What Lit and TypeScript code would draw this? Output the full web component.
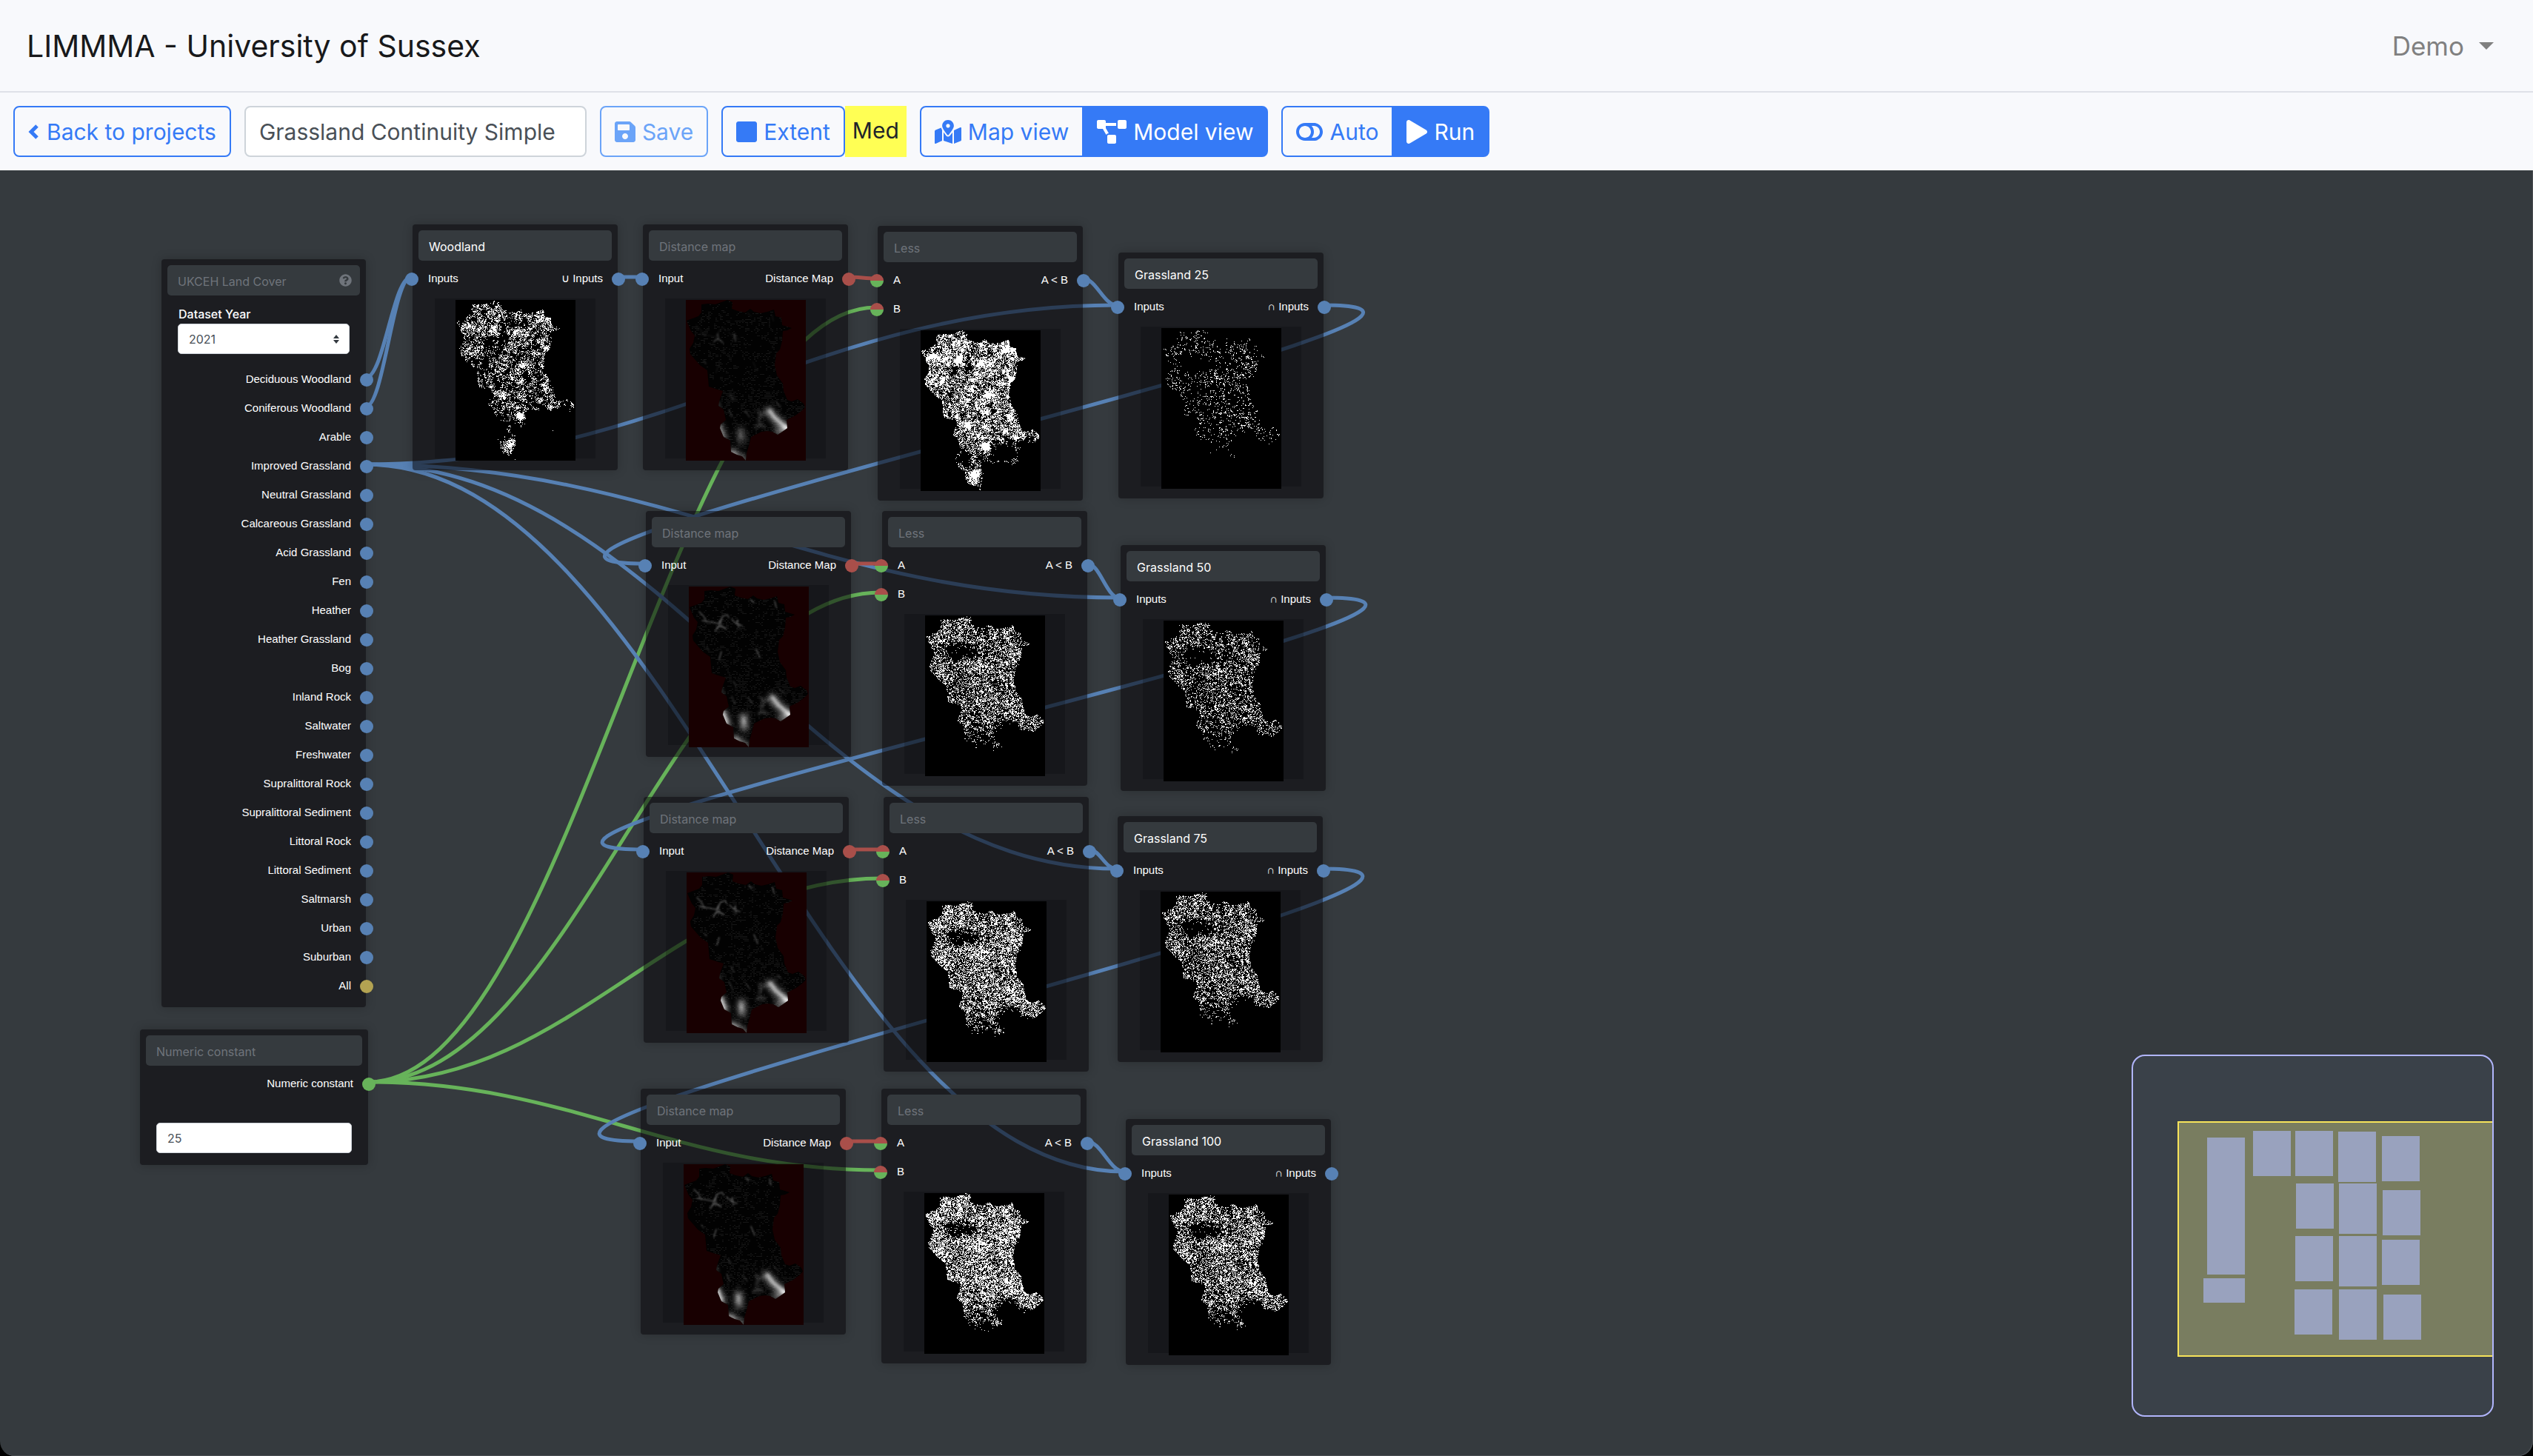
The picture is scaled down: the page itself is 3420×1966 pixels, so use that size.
import { LitElement, html, css, svg, nothing } from "lit";
import { customElement, property } from "lit/decorators.js";
import { classMap } from "lit/directives/class-map.js";
import { styleMap } from "lit/directives/style-map.js";

/* ---------- model ---------- */

type SocketKind = "set" | "distance" | "number" | "either" | "all";
type ThumbKind = "mask" | "distance";

interface Port {
  label: string;
  kind: SocketKind;
}

interface Thumb {
  kind: ThumbKind;
  seed: number;
  /** share of lit cells */
  density: number;
  /** true when the layer follows woodland clumps, false for open grassland */
  wooded: boolean;
}

interface FlowNode {
  id: string;
  x: number;
  y: number;
  w: number;
  h: number;
  placeholder: string;
  name: string;
  inputs: Port[];
  outputs: Port[];
  thumb?: Thumb;
  year?: string;
  value?: string;
}

interface Link {
  from: string;
  out: number;
  to: string;
  in: number;
  kind: "set" | "distance" | "number";
}

const HABITATS = [
  "Deciduous Woodland",
  "Coniferous Woodland",
  "Arable",
  "Improved Grassland",
  "Neutral Grassland",
  "Calcareous Grassland",
  "Acid Grassland",
  "Fen",
  "Heather",
  "Heather Grassland",
  "Bog",
  "Inland Rock",
  "Saltwater",
  "Freshwater",
  "Supralittoral Rock",
  "Supralittoral Sediment",
  "Littoral Rock",
  "Littoral Sediment",
  "Saltmarsh",
  "Urban",
  "Suburban",
];

const mask = (seed: number, density: number, wooded = false): Thumb => ({
  kind: "mask",
  seed,
  density,
  wooded,
});

const distanceNode = (id: string, x: number, y: number, wooded: boolean, seed: number): FlowNode => ({
  id, x, y, w: 277, h: 332,
  placeholder: "Distance map",
  name: "",
  inputs: [{ label: "Input", kind: "set" }],
  outputs: [{ label: "Distance Map", kind: "distance" }],
  thumb: { kind: "distance", seed, density: 0.2, wooded },
});

const lessNode = (id: string, x: number, y: number, thumb: Thumb): FlowNode => ({
  id, x, y, w: 277, h: 371,
  placeholder: "Less",
  name: "",
  inputs: [{ label: "A", kind: "either" }, { label: "B", kind: "either" }],
  outputs: [{ label: "A < B", kind: "set" }],
  thumb,
});

const setNode = (id: string, name: string, op: string, x: number, y: number, thumb: Thumb): FlowNode => ({
  id, x, y, w: 277, h: 332,
  placeholder: "",
  name,
  inputs: [{ label: "Inputs", kind: "set" }],
  outputs: [{ label: `${op} Inputs`, kind: "set" }],
  thumb,
});

const NODES: FlowNode[] = [
  {
    id: "cover", x: 218, y: 120, w: 276, h: 1010,
    placeholder: "UKCEH Land Cover",
    name: "",
    inputs: [],
    outputs: [
      ...HABITATS.map((label): Port => ({ label, kind: "set" })),
      { label: "All", kind: "all" },
    ],
    year: "2021",
  },
  {
    id: "number", x: 189, y: 1160, w: 308, h: 183,
    placeholder: "Numeric constant",
    name: "",
    inputs: [],
    outputs: [{ label: "Numeric constant", kind: "number" }],
    value: "25",
  },
  setNode("wood", "Woodland", "∪", 557, 73, mask(3, 0.31, true)),
  distanceNode("d1", 868, 73, true, 5),
  lessNode("l1", 1185, 75, mask(3, 0.5, true)),
  setNode("g1", "Grassland 25", "∩", 1510, 111, mask(11, 0.17)),
  distanceNode("d2", 872, 460, false, 6),
  lessNode("l2", 1191, 460, mask(11, 0.39)),
  setNode("g2", "Grassland 50", "∩", 1513, 506, mask(11, 0.29)),
  distanceNode("d3", 869, 846, false, 7),
  lessNode("l3", 1193, 846, mask(11, 0.47)),
  setNode("g3", "Grassland 75", "∩", 1509, 872, mask(11, 0.37)),
  distanceNode("d4", 865, 1240, false, 8),
  lessNode("l4", 1190, 1240, mask(11, 0.52)),
  setNode("g4", "Grassland 100", "∩", 1520, 1281, mask(11, 0.43)),
];

const LINKS: Link[] = [
  { from: "cover", out: 0, to: "wood", in: 0, kind: "set" },
  { from: "cover", out: 1, to: "wood", in: 0, kind: "set" },
  { from: "wood", out: 0, to: "d1", in: 0, kind: "set" },
  ...[1, 2, 3, 4].flatMap((n): Link[] => [
    { from: "cover", out: 3, to: `g${n}`, in: 0, kind: "set" },
    { from: `l${n}`, out: 0, to: `g${n}`, in: 0, kind: "set" },
    { from: "number", out: 0, to: `l${n}`, in: 1, kind: "number" },
  ]),
  ...[1, 2, 3].map((n): Link => ({ from: `g${n}`, out: 0, to: `d${n + 1}`, in: 0, kind: "set" })),
  ...[1, 2, 3, 4].map((n): Link => ({ from: `d${n}`, out: 0, to: `l${n}`, in: 0, kind: "distance" })),
];

const FIRST_ROW = 74;
const ROW_STEP = 39;

const socketY = (n: FlowNode, index: number) =>
  n.y + (n.year ? 163 : FIRST_ROW) + index * ROW_STEP - 3;

const linkPath = (link: Link): string => {
  const a = NODES.find((n) => n.id === link.from)!;
  const b = NODES.find((n) => n.id === link.to)!;
  const x1 = a.x + a.w;
  const y1 = socketY(a, link.out);
  const x2 = b.x - 2;
  const y2 = socketY(b, link.in);
  const bend = Math.round(Math.abs(x2 - x1) * 0.4);
  return `M${x1} ${y1}C${x1 + bend} ${y1} ${x2 - bend} ${y2} ${x2} ${y2}`;
};

/* ---------- raster previews ---------- */

const MAP_W = 162;
const MAP_H = 217;

const OUTLINE: [number, number][] = [
  [21, 6], [30, 5], [40, 6], [51, 2], [56, 0], [63, 3], [62, 12], [70, 15], [80, 17], [87, 12],
  [92, 16], [101, 18], [110, 16], [119, 13], [121, 22], [129, 24], [130, 34], [143, 38],
  [137, 41], [131, 42], [130, 55], [127, 67], [122, 72], [120, 88], [123, 102], [131, 113],
  [132, 123], [137, 135], [143, 137], [151, 134], [159, 140], [161, 145], [156, 150],
  [148, 156], [140, 160], [136, 162], [137, 173], [130, 178], [124, 182], [117, 178],
  [110, 177], [102, 178], [94, 182], [88, 185], [85, 197], [82, 207], [81, 217], [76, 211],
  [69, 209], [61, 205], [60, 190], [51, 185], [46, 173], [47, 168], [54, 162], [51, 148],
  [44, 143], [45, 137], [50, 123], [40, 120], [31, 117], [29, 95], [19, 88], [12, 80],
  [6, 73], [5, 66], [10, 58], [12, 48], [7, 42], [1, 28], [9, 25], [17, 22], [21, 17],
];

const inside = (x: number, y: number): boolean => {
  let hit = false;
  for (let i = 0, j = OUTLINE.length - 1; i < OUTLINE.length; j = i++) {
    const [xi, yi] = OUTLINE[i];
    const [xj, yj] = OUTLINE[j];
    if (yi > y !== yj > y && x < ((xj - xi) * (y - yi)) / (yj - yi) + xi) hit = !hit;
  }
  return hit;
};

const hash = (x: number, y: number, seed: number): number => {
  let h = Math.imul(x, 374761393) ^ Math.imul(y, 668265263) ^ Math.imul(seed, 2246822519);
  h = Math.imul(h ^ (h >>> 13), 1274126177);
  h = Math.imul(h ^ (h >>> 15), 2246822519);
  return ((h ^ (h >>> 16)) >>> 0) / 4294967296;
};

const smooth = (x: number, y: number, size: number, seed: number): number => {
  const gx = Math.floor(x / size);
  const gy = Math.floor(y / size);
  const fx = x / size - gx;
  const fy = y / size - gy;
  const top = hash(gx, gy, seed) * (1 - fx) + hash(gx + 1, gy, seed) * fx;
  const low = hash(gx, gy + 1, seed) * (1 - fx) + hash(gx + 1, gy + 1, seed) * fx;
  return top * (1 - fy) + low * fy;
};

/** x, y, radius x, radius y, weight */
type Patch = [number, number, number, number, number];

const WOOD_PATCHES: Patch[] = [
  [18, 38, 11, 6, 0.4], [52, 40, 6, 9, 0.55], [82, 44, 9, 5, 0.45], [86, 18, 7, 6, 0.4],
  [117, 22, 8, 9, 0.4], [20, 68, 9, 11, 0.2], [93, 88, 8, 7, 0.3], [122, 66, 6, 6, 0.3],
  [62, 129, 6, 6, 0.55], [88, 159, 6, 7, 0.65], [73, 194, 8, 8, 0.75], [32, 9, 10, 6, 0.25],
  [128, 146, 4, 4, 0.35], [66, 52, 7, 7, -0.35], [45, 55, 6, 6, -0.25], [112, 165, 16, 14, -0.8],
  [150, 147, 6, 6, -0.25], [55, 175, 12, 12, -0.4], [140, 165, 10, 14, -0.8],
  [60, 210, 8, 8, -0.3], [86, 190, 6, 16, -0.4], [66, 165, 14, 14, -0.2],
];

const GRASS_PATCHES: Patch[] = [
  [38, 44, 16, 7, -0.35], [60, 49, 15, 6, -0.35], [40, 56, 12, 5, -0.3], [112, 158, 13, 12, -0.9],
  [126, 172, 14, 12, -0.9], [68, 202, 26, 17, -1], [70, 214, 22, 14, -1], [48, 178, 10, 16, -0.6],
  [95, 91, 6, 6, -0.25], [42, 92, 6, 6, -0.2], [80, 68, 24, 10, 0.14], [112, 48, 12, 14, 0.14],
  [118, 124, 14, 10, 0.14], [16, 72, 8, 8, 0.1], [46, 10, 14, 8, 0.06], [140, 165, 8, 12, -0.3],
  [74, 172, 34, 24, -0.22], [100, 182, 20, 6, -0.2],
];

const maskPath = (t: Thumb): string => {
  const patches = t.wooded ? WOOD_PATCHES : GRASS_PATCHES;
  const scale = t.wooded ? 1 : 0.5 + t.density;
  let d = "";
  for (let y = 0; y < MAP_H; y++) {
    let run = 0;
    for (let x = 0; x <= MAP_W; x++) {
      let lit = false;
      if (x < MAP_W && inside(x + 0.5, y + 0.5)) {
        const ripple = 0.4 + 1.2 * smooth(x, y, 5, t.seed + 4);
        let p = t.density;
        for (const [cx, cy, rx, ry, w] of patches) {
          const q = ((x - cx) / rx) ** 2 + ((y - cy) / ry) ** 2;
          if (q < 4) p += w * scale * (w > 0 ? ripple : 1) * Math.exp(-q);
        }
        p += (smooth(x, y, 8, t.seed) - 0.5) * (t.wooded ? 0.4 : 0.3 * t.density);
        if (p > 0.02) {
          const v =
            0.55 * hash(x, y, t.seed + 1) +
            0.45 * smooth(x, y, t.wooded ? 3 : 2, t.seed + 2);
          lit = v < 0.16 + p * 0.68;
          if (p < 0.3 && lit) lit = hash(x, y, t.seed + 9) < 0.3 + p * 2.3;
        }
      }
      if (lit) run++;
      else if (run) {
        d += `M${x - run} ${y}h${run}v1h-${run}z`;
        run = 0;
      }
    }
  }
  return d;
};

const speckPath = (seed: number): string => {
  let d = "";
  for (let y = 0; y < MAP_H; y += 2) {
    for (let x = 0; x < MAP_W; x += 2) {
      const low = y > 120 ? 0.1 : 0;
      if (inside(x, y) && 0.5 * hash(x, y, seed) + 0.5 * smooth(x, y, 5, seed) < 0.36 + low) {
        d += `M${x} ${y}h2v1h-2z`;
      }
    }
  }
  return d;
};

const cache = new Map<string, string>();
const cached = (key: string, make: () => string): string => {
  if (!cache.has(key)) cache.set(key, make());
  return cache.get(key)!;
};

const OUTLINE_PATH = "M" + OUTLINE.map((p) => p.join(" ")).join("L") + "Z";

@customElement("map-thumb")
export class MapThumb extends LitElement {
  static styles = css`
    :host { display: block; }
    svg { display: block; width: 162px; height: 217px; }
    .pixels { shape-rendering: crispEdges; }
  `;

  @property({ attribute: false }) thumb!: Thumb;

  render() {
    const t = this.thumb;
    if (t.kind === "mask") {
      const d = cached(`m${t.seed}-${t.density}`, () => maskPath(t));
      return html`<svg viewBox="0 0 162 217" aria-hidden="true">
        <rect width="162" height="217" fill="#000" />
        <path class="pixels" d=${d} fill="#fff" />
      </svg>`;
    }
    const west = t.wooded ? 0.5 : 1;
    return html`<svg viewBox="0 0 162 217" aria-hidden="true">
      <defs>
        <clipPath id="land"><path d=${OUTLINE_PATH} /></clipPath>
        <filter id="wide" x="-20" y="100" width="200" height="140" filterUnits="userSpaceOnUse">
          <feGaussianBlur stdDeviation="4" />
        </filter>
        <filter id="soft" x="-20" y="100" width="200" height="140" filterUnits="userSpaceOnUse">
          <feGaussianBlur stdDeviation="2" />
        </filter>
        <filter id="fine" x="-10" y="-10" width="180" height="240" filterUnits="userSpaceOnUse">
          <feGaussianBlur stdDeviation="1" />
        </filter>
      </defs>
      <rect width="162" height="217" fill="#180001" />
      <path d=${OUTLINE_PATH} fill="#020202" />
      <g clip-path="url(#land)" fill="none" stroke-linecap="round" stroke-linejoin="round">
        <path d=${cached(`s${t.seed}`, () => speckPath(t.seed))} fill="#161616" />
        <g filter="url(#wide)" stroke="#fff">
          <path d="M112 150L120 160L136 174" stroke-width="9" stroke-opacity=".55" />
          <path d="M124 179L137 173" stroke-width="8" stroke-opacity=".5" />
          <path d="M45 171L51 186" stroke-width="9" stroke-opacity=${0.7 * west} />
          <path d="M74 176L75 190" stroke-width="8" stroke-opacity=${0.65 * west} />
          <path d="M61 204L80 217" stroke-width="6" stroke-opacity=".6" />
        </g>
        <g filter="url(#soft)" stroke="#fff">
          <path d="M113 149L119 158L128 166L138 174" stroke-width="3" stroke-opacity=".85" />
          <path d="M134 172L138 174" stroke-width="5" />
          <path d="M46 169L48 178L51 184" stroke-width="3" stroke-opacity=${0.9 * west} />
          <path d="M74 177L74 186" stroke-width="2" stroke-opacity=${0.6 * west} />
          <path d="M61 205L68 209" stroke-width="3" stroke-opacity=".6" />
          <path d="M98 150L101 156L98 164M104 154L113 150M94 172L100 168L106 172M44 138L46 145" stroke-width="2" stroke-opacity=".35" />
        </g>
        <g filter="url(#fine)" stroke="#888" stroke-width="1.6">
          <path d="M66 46L67 56M38 56L44 52L50 58M44 52L43 46" stroke-opacity=".4" />
          <path
            stroke-opacity=${t.wooded ? 0.1 : 0.55}
            d="M14 34L20 40L24 48M18 46L30 48L40 50L46 40L52 38L54 42M46 40L40 54L36 60M42 54L50 56M58 44L64 50L72 53M64 50L66 45M84 18L88 22M116 20L118 28M91 84L96 96M44 88L41 98"
          />
          <path d="M24 82L27 86M60 128L64 134M58 148L62 158M80 150L86 158M122 138L128 144" stroke-opacity=".3" />
        </g>
      </g>
    </svg>`;
  }
}

/* ---------- node ---------- */

@customElement("flow-node")
export class FlowNodeElement extends LitElement {
  static styles = css`
    :host {
      display: block;
      box-sizing: border-box;
      padding: 8px 8px 0;
      border-radius: 4px;
      background: rgba(8, 5, 9, 0.55);
      box-shadow: 0 0 14px rgba(0, 0, 0, 0.22);
      color: #fff;
      font: 15px/18px "Liberation Sans", Arial, sans-serif;
    }
    .header { display: grid; align-items: center; }
    .header > * { grid-area: 1 / 1; }
    .name, .value, .year {
      box-sizing: border-box;
      width: 100%;
      height: 41px;
      margin: 0;
      border: 0;
      border-radius: 5px;
      padding: 2px 14px 0;
      outline: 0;
      font: 16px/24px Inter, Roboto, sans-serif;
    }
    .name { background: #353a3e; color: #fff; }
    .name::placeholder { color: #6f747b; opacity: 1; }
    .help {
      justify-self: end;
      width: 17px;
      height: 17px;
      margin-right: 11px;
      fill: #6f747b;
    }
    .field { display: grid; gap: 2px; padding: 14px 14px 10px; }
    .caption { font: 500 16px/22px Inter, Roboto, sans-serif; padding-left: 1px; }
    .picker { display: grid; align-items: center; }
    .picker > * { grid-area: 1 / 1; }
    .year, .value {
      appearance: none;
      background: #fff;
      color: #495057;
      border: 1px solid #ced4da;
      padding-top: 0;
    }
    .arrows {
      justify-self: end;
      width: 10px;
      height: 12px;
      margin-right: 13px;
      fill: #343a40;
      pointer-events: none;
    }
    .ports { display: grid; gap: 1px; margin: 0 -8px; padding-top: 6px; }
    .row {
      position: relative;
      display: flex;
      align-items: center;
      justify-content: space-between;
      box-sizing: border-box;
      height: 38px;
      padding: 0 20px 2px 21px;
    }
    .out { margin-left: auto; }
    .socket {
      position: absolute;
      top: 10px;
      width: 18px;
      height: 18px;
      border-radius: 50%;
      background: #5781b4;
    }
    .left { left: -10px; }
    .right { right: -10px; }
    .distance { background: #a94f4a; }
    .number { background: #67b35a; }
    .all { background: #b3a352; }
    .either { background: linear-gradient(#a94f4a 50%, #67b35a 50%); }
    .preview {
      display: flex;
      justify-content: center;
      box-sizing: border-box;
      height: 216px;
      margin: 7px 22px 0;
      padding-top: 2px;
      background: rgba(0, 0, 0, 0.18);
    }
    .constant { padding: 33px 14px 0; }
  `;

  @property({ attribute: false }) node!: FlowNode;

  private row(index: number) {
    const input = this.node.inputs[index];
    const output = this.node.outputs[index];
    return html`<div class="row">
      ${input
        ? html`<span class=${classMap({ socket: true, left: true, [input.kind]: true })}></span>
            <span>${input.label}</span>`
        : nothing}
      ${output
        ? html`<span class="out">${output.label}</span>
            <span class=${classMap({ socket: true, right: true, [output.kind]: true })}></span>`
        : nothing}
    </div>`;
  }

  render() {
    const n = this.node;
    const rows = Math.max(n.inputs.length, n.outputs.length);
    return html`
      <div class="header">
        <input
          class="name"
          type="text"
          aria-label="Node name"
          placeholder=${n.placeholder}
          .value=${n.name}
        />
        ${n.year
          ? html`<svg class="help" viewBox="0 0 512 512" aria-hidden="true">
              <path d="M504 256c0 136.997-111.043 248-248 248S8 392.997 8 256C8 119.083 119.043 8 256 8s248 111.083 248 248zM262.655 90c-54.497 0-89.255 22.957-116.549 63.758-3.536 5.286-2.353 12.415 2.715 16.258l34.699 26.31c5.205 3.947 12.621 3.008 16.665-2.122 17.864-22.658 30.113-35.797 57.303-35.797 20.429 0 45.698 13.148 45.698 32.958 0 14.976-12.363 22.667-32.534 33.976C247.128 238.528 216 254.941 216 296v4c0 6.627 5.373 12 12 12h56c6.627 0 12-5.373 12-12v-1.333c0-28.462 83.186-29.647 83.186-106.667 0-58.002-60.165-102-116.531-102zM256 338c-25.365 0-46 20.635-46 46 0 25.364 20.635 46 46 46s46-20.636 46-46c0-25.365-20.635-46-46-46z" />
            </svg>`
          : nothing}
      </div>
      ${n.year
        ? html`<div class="field">
            <label class="caption" for="year">Dataset Year</label>
            <div class="picker">
              <select class="year" id="year"><option>${n.year}</option></select>
              <svg class="arrows" viewBox="0 0 10 12" aria-hidden="true">
                <path d="M5 0L9 5H1zM5 12L1 7H9z" />
              </svg>
            </div>
          </div>`
        : nothing}
      <div class="ports">${Array.from({ length: rows }, (_, i) => this.row(i))}</div>
      ${n.thumb ? html`<div class="preview"><map-thumb .thumb=${n.thumb}></map-thumb></div>` : nothing}
      ${n.value
        ? html`<div class="constant">
            <input class="value" type="text" inputmode="numeric" aria-label="Numeric constant" .value=${n.value} />
          </div>`
        : nothing}
    `;
  }
}

/* ---------- page ---------- */

const ICONS = {
  save: [448, "M433.941 129.941l-83.882-83.882A48 48 0 0 0 316.118 32H48C21.49 32 0 53.49 0 80v352c0 26.51 21.49 48 48 48h352c26.51 0 48-21.49 48-48V163.882a48 48 0 0 0-14.059-33.941zM224 416c-35.346 0-64-28.654-64-64 0-35.346 28.654-64 64-64s64 28.654 64 64c0 35.346-28.654 64-64 64zm96-304.52V212c0 6.627-5.373 12-12 12H76c-6.627 0-12-5.373-12-12V108c0-6.627 5.373-12 12-12h228.52c3.183 0 6.235 1.264 8.485 3.515l3.48 3.48A11.996 11.996 0 0 1 320 111.48z"],
  square: [448, "M400 32H48C21.5 32 0 53.5 0 80v352c0 26.5 21.5 48 48 48h352c26.5 0 48-21.5 48-48V80c0-26.500-21.5-48-48-48z"],
  map: [576, "M288 0c-69.59 0-126 56.41-126 126 0 56.26 82.35 158.8 113.9 196.02 6.39 7.54 17.82 7.54 24.2 0C331.65 284.8 414 182.26 414 126 414 56.41 357.59 0 288 0zm0 168c-23.2 0-42-18.8-42-42s18.8-42 42-42 42 18.8 42 42-18.8 42-42 42zM20.12 215.95A32.006 32.006 0 0 0 0 245.66v250.32c0 11.32 11.43 19.06 21.94 14.86L160 448V214.92c-8.84-15.98-16.07-31.54-21.25-46.42L20.12 215.95zM288 359.67c-14.07 0-27.38-6.18-36.51-16.96-19.66-23.2-40.57-49.62-59.49-76.72v182l192 64V266c-18.92 27.09-39.82 53.52-59.49 76.72-9.13 10.77-22.44 16.95-36.51 16.95zm266.06-198.51L416 224v288l139.88-55.95A31.996 31.996 0 0 0 576 426.34V176.02c0-11.32-11.43-19.06-21.94-14.86z"],
  model: [640, "M384 320H256c-17.67 0-32 14.33-32 32v128c0 17.67 14.33 32 32 32h128c17.67 0 32-14.33 32-32V352c0-17.67-14.33-32-32-32zM192 32c0-17.67-14.33-32-32-32H32C14.33 0 0 14.33 0 32v128c0 17.67 14.33 32 32 32h95.72l73.16 128.04C211.98 300.98 232.4 288 256 288h.28L192 175.51V128h224V64H192V32zM608 0H480c-17.67 0-32 14.33-32 32v128c0 17.67 14.33 32 32 32h128c17.67 0 32-14.33 32-32V32c0-17.67-14.33-32-32-32z"],
  toggle: [576, "M384 64H192C85.961 64 0 149.961 0 256s85.961 192 192 192h192c106.039 0 192-85.961 192-192S490.039 64 384 64zM64 256c0-70.741 57.249-128 128-128 70.741 0 128 57.249 128 128 0 70.741-57.249 128-128 128-70.741 0-128-57.249-128-128zm320 128h-48.905c65.217-72.858 65.236-183.12 0-256H384c70.741 0 128 57.249 128 128 0 70.74-57.249 128-128 128z"],
  play: [448, "M424.4 214.7L72.4 6.6C43.8-10.3 0 6.1 0 47.9V464c0 37.5 40.7 60.1 72.4 41.3l352-208c31.4-18.5 31.5-64.1 0-82.6z"],
} as const;

const icon = (name: keyof typeof ICONS) => {
  const [w, d] = ICONS[name];
  return html`<svg class="icon" width=${w / 16} height="32" viewBox="0 0 ${w} 512" aria-hidden="true">
    <path d=${d} />
  </svg>`;
};

const MINI_SCALE = 0.183;

@customElement("app-root")
export class AppRoot extends LitElement {
  static styles = css`
    :host {
      display: flex;
      flex-direction: column;
      min-height: 100vh;
      background: #000;
      color: #212529;
      font: 30px/48px Inter, Roboto, sans-serif;
    }
    .navbar {
      display: flex;
      align-items: center;
      justify-content: space-between;
      height: 123px;
      padding: 0 53px 0 36px;
      background: #f8f9fc;
      border-bottom: 2px solid #dfe1e8;
    }
    .brand { color: #18191b; font-size: 41px; text-decoration: none; }
    .account {
      display: flex;
      align-items: center;
      gap: 20px;
      border: 0;
      padding: 0;
      background: none;
      color: #808080;
      font: 35px/48px Inter, Roboto, sans-serif;
    }
    .caret { width: 20px; height: 10px; fill: #808080; }
    .toolbar { display: flex; gap: 18px; padding: 18px; background: #f8f9fc; }
    .group { display: flex; }
    .btn {
      display: flex;
      align-items: center;
      gap: 9px;
      box-sizing: border-box;
      height: 69px;
      padding: 0 18px;
      border: 2px solid #357af6;
      border-radius: 8px;
      background: none;
      color: #357af6;
      font: inherit;
      white-space: nowrap;
      text-decoration: none;
    }
    .icon { display: block; fill: currentColor; flex: none; }
    .chevron { display: block; width: 16px; height: 20px; fill: none; stroke: currentColor; stroke-width: 5; }
    .solid { background: #357af6; color: #fff; }
    .faded { border-color: #6ba4f8; color: #6ba4f8; }
    .first { border-top-right-radius: 0; border-bottom-right-radius: 0; }
    .last { border-top-left-radius: 0; border-bottom-left-radius: 0; margin-left: -2px; }
    .project {
      box-sizing: border-box;
      width: 462px;
      height: 69px;
      border: 2px solid #ced4da;
      border-radius: 8px;
      padding: 0 18px;
      background: #fff;
      color: #495057;
      font: inherit;
    }
    .level { padding: 9px 10px 0; background: #ffff54; }
    .canvas {
      position: relative;
      flex: 1;
      overflow: hidden;
      border-radius: 0 0 20px 20px;
      background: #353a3e;
      box-shadow: inset -1px -1px 0 #4a4e52;
    }
    .links { position: absolute; inset: 0; width: 100%; height: 100%; fill: none; stroke-width: 5; }
    .set { stroke: #5781b4; }
    .number { stroke: #67b35a; }
    .distance { stroke: #a94f4a; }
    .node { position: absolute; }
    .minimap {
      position: absolute;
      right: 53px;
      bottom: 53px;
      width: 485px;
      height: 485px;
      overflow: hidden;
      border: 2px solid #b1b5fb;
      border-radius: 18px;
      background: #3a4149;
    }
    .view {
      position: absolute;
      box-sizing: border-box;
      border: 2px solid #f7e45a;
      background: #797d60;
    }
    .block { position: absolute; background: #99a2be; }
  `;

  private box(x: number, y: number, w: number, h: number) {
    const px = (v: number) => `${Math.round(v)}px`;
    return styleMap({
      left: px(60 + x * MINI_SCALE),
      top: px(88 + y * MINI_SCALE),
      width: px(w * MINI_SCALE),
      height: px(h * MINI_SCALE),
    });
  }

  render() {
    return html`
      <header class="navbar">
        <a class="brand" href="#">LIMMMA - University of Sussex</a>
        <button class="account" type="button">
          Demo
          <svg class="caret" viewBox="0 0 20 10" aria-hidden="true"><path d="M0 0H20L10 10z" /></svg>
        </button>
      </header>
      <nav class="toolbar">
        <a class="btn" href="#">
          <svg class="chevron" viewBox="0 0 16 20" aria-hidden="true"><path d="M12 2L4 10L12 18" /></svg>
          Back to projects
        </a>
        <input class="project" type="text" aria-label="Project name" .value=${"Grassland Continuity Simple"} />
        <button class="btn faded" type="button" disabled>${icon("save")} Save</button>
        <div class="group">
          <button class="btn" type="button">${icon("square")} Extent</button>
          <span class="level">Med</span>
        </div>
        <div class="group">
          <button class="btn first" type="button">${icon("map")} Map view</button>
          <button class="btn solid last" type="button">${icon("model")} Model view</button>
        </div>
        <div class="group">
          <button class="btn first" type="button">${icon("toggle")} Auto</button>
          <button class="btn solid last" type="button">${icon("play")} Run</button>
        </div>
      </nav>
      <main class="canvas">
        <svg class="links" aria-hidden="true">
          ${LINKS.map((l) => svg`<path class=${l.kind} d=${linkPath(l)} />`)}
        </svg>
        ${NODES.map(
          (n) => html`<flow-node
            class="node"
            .node=${n}
            style=${styleMap({ left: `${n.x}px`, top: `${n.y}px`, width: `${n.w}px`, height: `${n.h}px` })}
          ></flow-node>`
        )}
        <div class="minimap">
          <div class="view" style=${this.box(0, 0, 3420, 1736)}></div>
          ${NODES.map((n) => html`<div class="block" style=${this.box(n.x, n.y, n.w, n.h)}></div>`)}
        </div>
      </main>
    `;
  }
}
